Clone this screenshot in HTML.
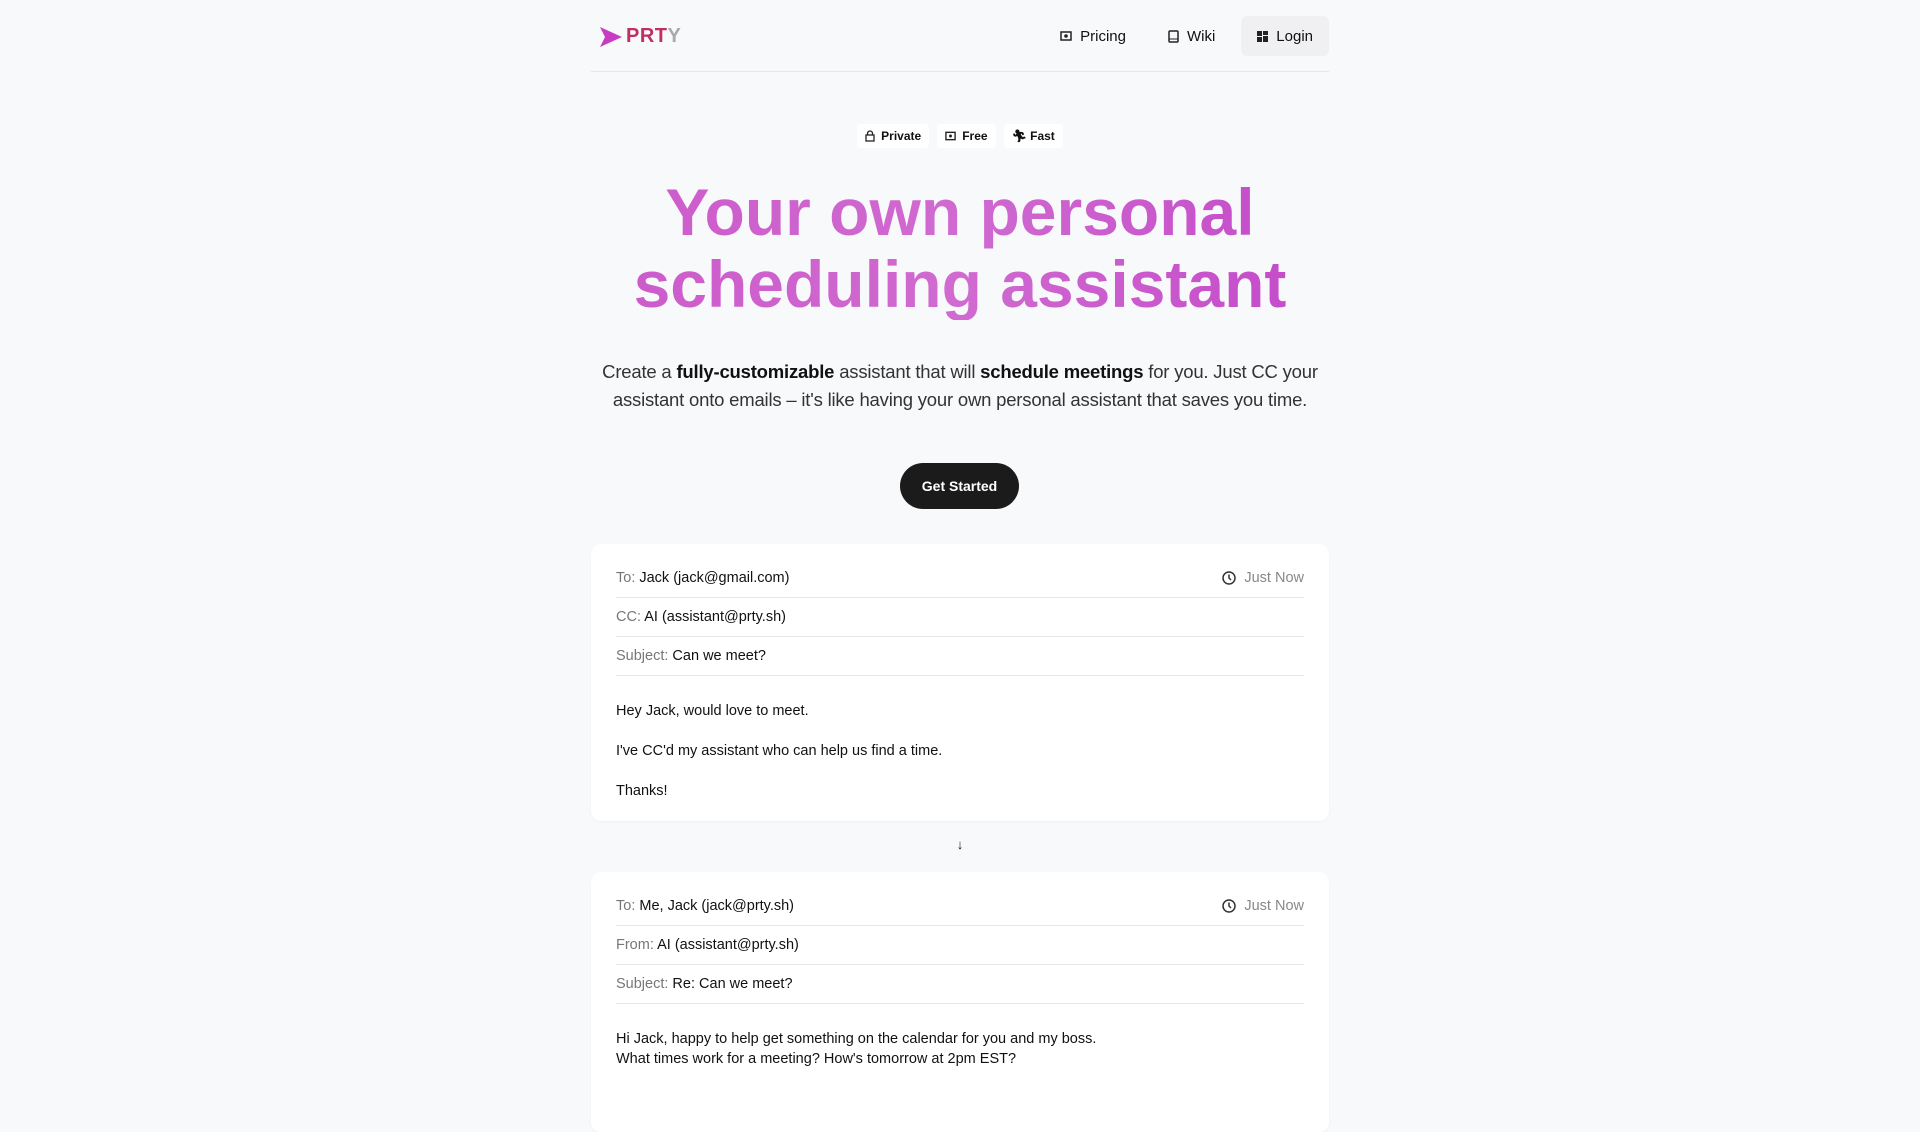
<!DOCTYPE html>
<html><head><meta charset="utf-8"><style>
*{box-sizing:border-box;margin:0;padding:0}
body{width:1920px;height:1080px;overflow:hidden;background:#f8f9fb;font-family:"Liberation Sans",sans-serif;color:#111}
.wrap{position:absolute;left:591px;width:738px;top:0}
.hdr{height:72px;border-bottom:1px solid #e5e7eb;position:relative}
.logo{position:absolute;left:9px;top:25px;display:flex;align-items:center;font-weight:700;font-size:20px;letter-spacing:0.5px}
.nav{position:absolute;right:0;top:16px;display:flex;gap:10px;font-size:15px;font-weight:500}
.nav div{height:40px;padding:0 16px;display:flex;align-items:center;gap:8px;border-radius:6px}
.badges{position:absolute;top:124px;left:0;width:738px;display:flex;justify-content:center;gap:8px;font-size:12px;font-weight:700}
.badges div{background:#fff;padding:5px 8px;display:flex;align-items:center;gap:6px;border-radius:4px}
h1{position:absolute;top:176px;left:-100px;width:938px;text-align:center;font-size:66px;line-height:72px;font-weight:700;background:linear-gradient(90deg,#cb55c9,#d06ad0,#c040c8);-webkit-background-clip:text;color:transparent}
.sub{position:absolute;top:358px;left:-20px;width:778px;text-align:center;font-size:18.5px;line-height:28px;color:#333;letter-spacing:-0.2px}
.sub b{color:#111}
.btn{position:absolute;top:463px;left:309px;width:119px;height:46px;border-radius:23px;background:#1b1b1b;color:#fff;font-size:14px;font-weight:700;display:flex;align-items:center;justify-content:center}
.card{position:absolute;left:0;width:738px;background:#fff;border-radius:10px;padding:15px 25px 8px;box-shadow:0 1px 3px rgba(0,0,0,.03)}
.row{height:39px;border-bottom:1px solid #e5e7eb;display:flex;align-items:center;font-size:14.5px;justify-content:space-between}
.row span.l{color:#777}
.t{color:#888;display:flex;align-items:center;gap:8px}
.body{padding-top:25px;font-size:14.5px;line-height:20px}
.body p{margin-bottom:20px}
</style></head><body>
<div class="wrap">
<div class="hdr">
<div class="logo"><svg width="22" height="20" viewBox="0 0 22 20"><path d="M0 0L22 10L0 20L5 10Z" fill="#c83cc3"/></svg><span style="color:#c0305e;margin-left:4px">PRT</span><span style="color:#aaa">Y</span></div>
<div class="nav">
<div><svg width="12" height="12" viewBox="0 0 12 12"><rect x="1" y="2" width="10" height="8" fill="none" stroke="#222" stroke-width="1.5"/><circle cx="6" cy="6" r="1.8" fill="#222"/></svg>Pricing</div>
<div><svg width="11" height="13" viewBox="0 0 11 13"><rect x="1" y="1" width="9" height="11" rx="1" fill="none" stroke="#222" stroke-width="1.5"/><line x1="1" y1="9" x2="10" y2="9" stroke="#222"/></svg>Wiki</div>
<div style="background:#f0f0f2"><svg width="11" height="11" viewBox="0 0 11 11" fill="#222"><rect width="5" height="5"/><rect x="6" width="5" height="4"/><rect y="6" width="5" height="5"/><rect x="6" y="5" width="5" height="6"/></svg>Login</div>
</div>
</div>
<div class="badges">
<div><svg width="10" height="12" viewBox="0 0 10 12"><path d="M2.5 5V3.5a2.5 2.5 0 0 1 5 0V5" fill="none" stroke="#222" stroke-width="1.3"/><rect x="1" y="5" width="8" height="6" fill="none" stroke="#222" stroke-width="1.3"/></svg> Private</div><div><svg width="11" height="10" viewBox="0 0 12 10"><rect x="1" y="1" width="10" height="8" fill="none" stroke="#222" stroke-width="1.5"/><circle cx="6" cy="5" r="1.6" fill="#222"/></svg> Free</div><div>🏃︎ Fast</div>
</div>
<h1>Your own personal<br>scheduling assistant</h1>
<div class="sub">Create a <b>fully-customizable</b> assistant that will <b>schedule meetings</b> for you. Just CC your<br>assistant onto emails – it's like having your own personal assistant that saves you time.</div>
<div class="btn">Get Started</div>
<div class="card" style="top:544px;height:277px">
<div class="row"><span><span class="l">To:</span> Jack (jack@gmail.com)</span><span class="t"><svg width="14" height="14" viewBox="0 0 14 14"><circle cx="7" cy="7" r="6" fill="none" stroke="#333" stroke-width="1.5"/><path d="M7 3.5V7l2 2" fill="none" stroke="#333" stroke-width="1.5"/></svg>Just Now</span></div>
<div class="row"><span><span class="l">CC:</span> AI (assistant@prty.sh)</span></div>
<div class="row"><span><span class="l">Subject:</span> Can we meet?</span></div>
<div class="body"><p>Hey Jack, would love to meet.</p><p>I've CC'd my assistant who can help us find a time.</p><p>Thanks!</p></div>
</div>
<div style="position:absolute;top:837px;left:0;width:738px;text-align:center;font-size:13px">↓</div>
<div class="card" style="top:872px;height:260px">
<div class="row"><span><span class="l">To:</span> Me, Jack (jack@prty.sh)</span><span class="t"><svg width="14" height="14" viewBox="0 0 14 14"><circle cx="7" cy="7" r="6" fill="none" stroke="#333" stroke-width="1.5"/><path d="M7 3.5V7l2 2" fill="none" stroke="#333" stroke-width="1.5"/></svg>Just Now</span></div>
<div class="row"><span><span class="l">From:</span> AI (assistant@prty.sh)</span></div>
<div class="row"><span><span class="l">Subject:</span> Re: Can we meet?</span></div>
<div class="body">Hi Jack, happy to help get something on the calendar for you and my boss.<br>What times work for a meeting? How's tomorrow at 2pm EST?</div>
</div>
</div>
</body></html>
